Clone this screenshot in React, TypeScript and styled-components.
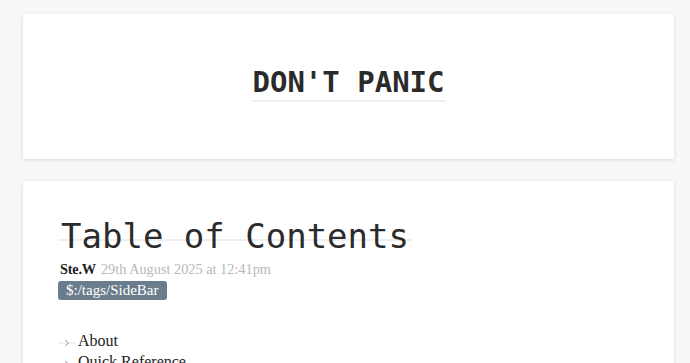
import React from "react";
import styled, { createGlobalStyle } from "styled-components";

const Global = createGlobalStyle`
  html, body { margin: 0; padding: 0; background: #f8f8f8; }
  body { font-family: "Liberation Serif", serif; color: #333; overflow: hidden; }
`;

const Page = styled.div`
  display: flex;
  flex-direction: column;
  gap: 22px;
  padding: 14px 16px 0 23px;
`;

const Card = styled.section<{ $height: number }>`
  background: #fff;
  box-shadow: 0 1px 4px rgba(0, 0, 0, 0.14);
  height: ${(p) => p.$height}px;
  box-sizing: border-box;
`;

const Banner = styled(Card)`
  display: flex;
  align-items: flex-start;
  justify-content: center;
  padding-top: 51px;
`;

const BannerTitle = styled.h1`
  margin: 0;
  display: inline-block;
  font-family: "DejaVu Sans Mono", monospace;
  font-weight: bold;
  font-size: 29px;
  line-height: 34px;
  color: #2b2b2b;
  padding: 0 1px 1px;
  border-bottom: 2px solid #f0f0f0;
`;

const Tiddler = styled(Card)`
  padding: 35px 0 0 35px;
  display: flex;
  flex-direction: column;
  align-items: flex-start;
`;

const Title = styled.h2`
  margin: 0;
  display: inline-block;
  font-family: "DejaVu Sans Mono", monospace;
  font-weight: normal;
  font-size: 34px;
  line-height: 40px;
  color: #2b2b2b;
  padding: 0 3px 0 3px;
  background: linear-gradient(#eeeeee, #eeeeee) no-repeat 0 23px / 100% 2px;
`;

const Meta = styled.div`
  margin-top: 3px;
  padding-left: 2px;
  font-size: 14.3px;
  line-height: 20px;
  display: flex;
  gap: 5px;
`;

const Author = styled.span`
  color: #222;
  font-weight: 600;
  letter-spacing: -0.2px;
`;

const Date = styled.span`
  color: #b8b8b8;
`;

const Tag = styled.span`
  margin-top: 2px;
  background: #6b7d8c;
  color: #fff;
  font-size: 15px;
  line-height: 19px;
  padding: 0 8px;
  border-radius: 3px;
`;

const List = styled.ul`
  list-style: none;
  margin: 30px 0 0;
  padding: 0;
`;

const Item = styled.li`
  display: flex;
  align-items: flex-start;
  font-size: 16px;
  line-height: 21px;
  color: #222;
`;

const ArrowBox = styled.svg`
  flex: none;
  width: 20px;
  height: 21px;
`;

const Arrow = () => (
  <ArrowBox viewBox="0 0 20 21">
    <line x1="0" y1="13" x2="18" y2="13" stroke="#e4e4e4" strokeWidth="1" />
    <polyline points="7,10 10.5,13 7,16" fill="none" stroke="#9a9a9a" strokeWidth="1" />
  </ArrowBox>
);

export default function App() {
  return (
    <>
      <Global />
      <Page>
        <Banner $height={145}>
          <BannerTitle>DON'T PANIC</BannerTitle>
        </Banner>
        <Tiddler $height={260}>
          <Title>Table of Contents</Title>
          <Meta>
            <Author>Ste.W</Author>
            <Date>29th August 2025 at 12:41pm</Date>
          </Meta>
          <Tag>$:/tags/SideBar</Tag>
          <List>
            <Item>
              <Arrow />
              About
            </Item>
            <Item>
              <Arrow />
              Quick Reference
            </Item>
          </List>
        </Tiddler>
      </Page>
    </>
  );
}
